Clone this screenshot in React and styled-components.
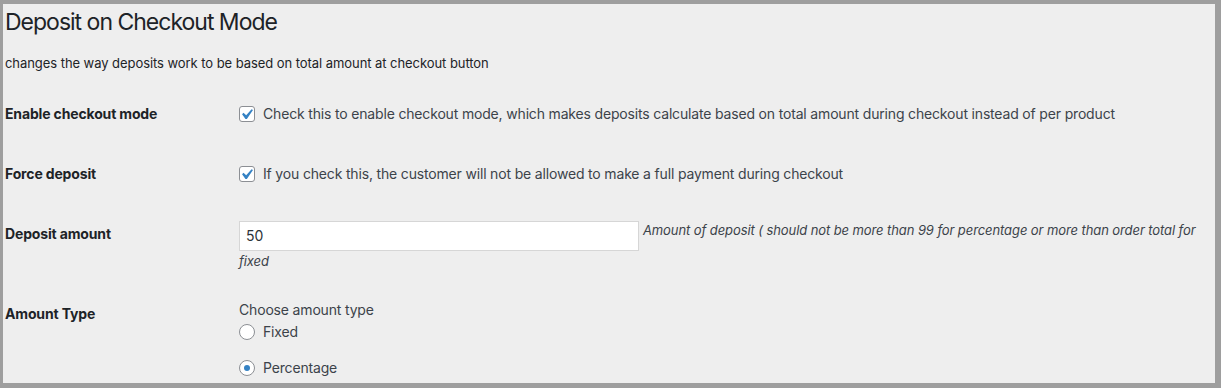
import React from "react";
import styled, { createGlobalStyle } from "styled-components";

const GlobalStyle = createGlobalStyle`
  html, body {
    margin: 0;
    padding: 0;
    background: #9e9e9e;
  }
  body {
    font-family: Inter, "Liberation Sans", Arial, sans-serif;
    color: #2c3338;
  }
`;

const Frame = styled.div`
  box-sizing: border-box;
  width: 1221px;
  height: 388px;
  overflow: hidden;
  background-color: #eeeeee;
  border-style: solid;
  border-color: #9e9e9e;
  border-width: 4px 6px 5px 3px;
  padding: 0 0 0 2px;
`;

const Title = styled.h2`
  margin: 5px 0 0;
  font-size: 23px;
  line-height: 26px;
  font-weight: 400;
  letter-spacing: -1px;
  color: #1d2327;
`;

const Intro = styled.p`
  margin: 19px 0 0;
  font-size: 13px;
  line-height: 18px;
  letter-spacing: -0.06px;
  color: #1d2327;
`;

const Row = styled.div`
  display: grid;
  grid-template-columns: 234px 1fr;
  align-items: start;
  padding-top: ${(p) => p.$top}px;
`;

const Label = styled.div`
  font-size: 14px;
  line-height: 20px;
  font-weight: 700;
  letter-spacing: -0.15px;
  color: #1d2327;
`;

const Field = styled.div`
  margin-top: ${(p) => p.$shift || 0}px;
  font-size: 14px;
  line-height: 20px;
  letter-spacing: -0.17px;
  color: #3c434a;
`;

const CheckLine = styled.label`
  display: flex;
  align-items: center;
  gap: 8px;
`;

const Box = styled.span`
  position: relative;
  box-sizing: border-box;
  flex: none;
  width: 16px;
  height: 16px;
  border: 1px solid #8c8f94;
  border-radius: 3px;
  background: #fff;

  svg {
    position: absolute;
    top: -3px;
    left: -4px;
  }
`;

const Input = styled.input`
  box-sizing: border-box;
  width: 400px;
  height: 30px;
  padding: 0 6px;
  margin: 0;
  border: 1px solid #d6d6d6;
  border-radius: 0;
  background: #fff;
  font-family: inherit;
  font-size: 14px;
  color: #2c3338;
  vertical-align: -6px;
  outline: none;
`;

const Hint = styled.span`
  font-size: 13px;
  line-height: 19.5px;
  font-style: italic;
  letter-spacing: -0.09px;
  color: #3c434a;
`;

const AmountField = styled(Field)`
  line-height: 19.5px;
  letter-spacing: 0;
`;

const Options = styled.div`
  display: flex;
  flex-direction: column;
  gap: 16px;
  margin-top: 2px;
`;

const Radio = styled.span`
  box-sizing: border-box;
  flex: none;
  width: 16px;
  height: 16px;
  border: 1px solid #8c8f94;
  border-radius: 50%;
  background: #fff;
  display: flex;
  align-items: center;
  justify-content: center;

  &::before {
    content: "";
    display: ${(p) => (p.$checked ? "block" : "none")};
    width: 6px;
    height: 6px;
    border-radius: 50%;
    background: #3582c4;
  }
`;

const Checkbox = () => (
  <Box>
    <svg width="21" height="21" viewBox="0 0 20 20">
      <path
        d="M14.83 4.89l1.34.94-5.81 8.38H9.02L5.78 9.67l1.34-1.25 2.57 2.4z"
        fill="#3582c4"
      />
    </svg>
  </Box>
);

const App = () => {
  return (
    <>
      <GlobalStyle />
      <Frame>
        <Title>Deposit on Checkout Mode</Title>
        <Intro>
          changes the way deposits work to be based on total amount at checkout
          button
        </Intro>

        <Row $top={32}>
          <Label>Enable checkout mode</Label>
          <Field>
            <CheckLine>
              <Checkbox />
              Check this to enable checkout mode, which makes deposits calculate
              based on total amount during checkout instead of per product
            </CheckLine>
          </Field>
        </Row>

        <Row $top={40}>
          <Label>Force deposit</Label>
          <Field>
            <CheckLine>
              <Checkbox />
              If you check this, the customer will not be allowed to make a full
              payment during checkout
            </CheckLine>
          </Field>
        </Row>

        <Row $top={40}>
          <Label>Deposit amount</Label>
          <AmountField $shift={-4}>
            <Input defaultValue="50" />{" "}
            <Hint>
              Amount of deposit ( should not be more than 99 for percentage or
              more than order total for fixed
            </Hint>
          </AmountField>
        </Row>

        <Row $top={33}>
          <Label>Amount Type</Label>
          <Field $shift={-4}>
            <div>Choose amount type</div>
            <Options>
              <CheckLine>
                <Radio />
                Fixed
              </CheckLine>
              <CheckLine>
                <Radio $checked />
                Percentage
              </CheckLine>
            </Options>
          </Field>
        </Row>
      </Frame>
    </>
  );
};

export default App;
